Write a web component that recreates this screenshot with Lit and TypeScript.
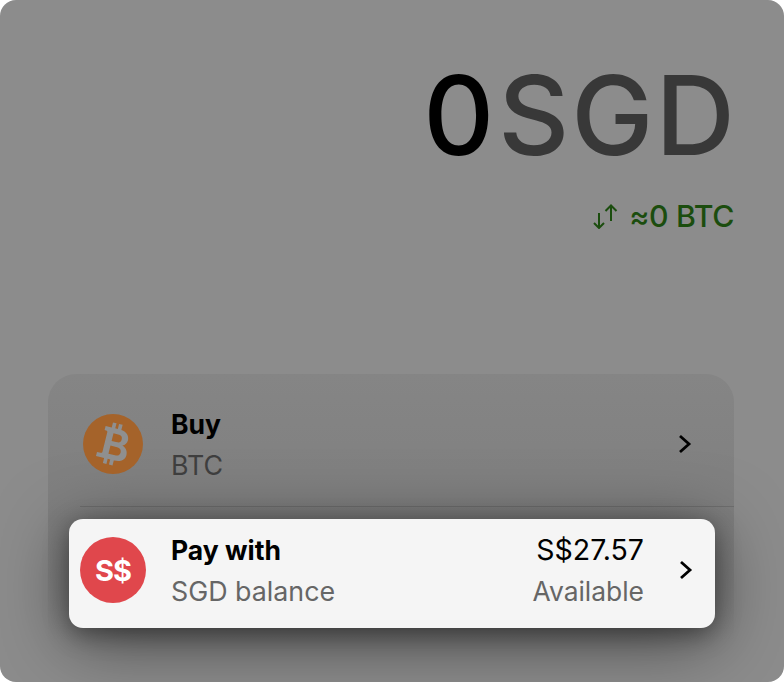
import { LitElement, css, html } from "lit";
import { customElement } from "lit/decorators.js";

@customElement("app-root")
export class AppRoot extends LitElement {
  static styles = css`
    :host {
      display: block;
      height: 682px;
      background: #fff;
      font-family: Inter, "Liberation Sans", sans-serif;
    }

    .sheet {
      box-sizing: border-box;
      height: 682px;
      padding: 0 50px 0 48px;
      background: #8c8c8c;
      border-radius: 16px;
      overflow: hidden;
    }

    .amount {
      display: flex;
      justify-content: flex-end;
      gap: 4px;
      margin-right: -3px;
      padding-top: 59px;
      font-size: 110px;
      line-height: 112px;
      font-weight: 500;
      letter-spacing: 2px;
      color: #383838;
    }

    .amount b {
      font-weight: 500;
      letter-spacing: 0;
      color: #000;
    }

    .convert {
      display: flex;
      justify-content: flex-end;
      align-items: center;
      gap: 11px;
      margin-top: 22px;
      font-size: 30.3px;
      line-height: 46px;
      font-weight: 500;
      letter-spacing: -0.4px;
      color: #1b4d0e;
    }

    .panel {
      height: 290px;
      margin-top: 135px;
      box-sizing: border-box;
      border-radius: 28px;
      background: linear-gradient(#858585, #7f7f7f 50%, #8c8c8c 92%);
    }

    .row {
      display: flex;
      align-items: center;
    }

    .buy {
      box-sizing: border-box;
      height: 133px;
      margin-left: 32px;
      padding: 8px 42px 0 3px;
      border-bottom: 1px solid #6f6f6f;
    }

    .pay {
      box-sizing: border-box;
      height: 109px;
      margin: 12px 19px 0 21px;
      padding: 0 22px 7px 11px;
      background: #f5f5f5;
      border-radius: 14px;
      box-shadow: 0 6px 24px rgba(0, 0, 0, 0.38), 0 14px 70px rgba(0, 0, 0, 0.5);
    }

    .coin {
      width: 60px;
      height: 60px;
      border-radius: 50%;
      flex: none;
      display: flex;
      align-items: center;
      justify-content: center;
    }

    .btc {
      background: #a5632a;
      color: #8f8f8f;
    }

    .sgd {
      width: 66px;
      height: 66px;
      background: #e0474c;
      color: #fff;
      font-size: 29px;
      font-weight: 700;
      letter-spacing: -1px;
    }

    .text {
      flex: 1;
      margin-left: 28px;
    }

    .pay .text {
      margin-left: 25px;
    }

    .title {
      font-size: 26.5px;
      line-height: 36px;
      font-weight: 700;
      color: #000;
    }

    .sub {
      margin-top: 5px;
      font-size: 26.8px;
      line-height: 36px;
      color: #3e3e3e;
    }

    .pay .sub {
      color: #666;
    }

    .values {
      margin-right: 35px;
      text-align: right;
    }

    .values .sub {
      font-size: 26.4px;
    }

    .value {
      font-size: 28.5px;
      line-height: 36px;
      color: #000;
    }

    svg {
      display: block;
      flex: none;
    }
  `;

  private chevron() {
    return html`<svg width="14" height="20" viewBox="0 0 14 20" fill="none" stroke="#000" stroke-width="2.8">
      <path d="M2 2 L11 10 L2 18" />
    </svg>`;
  }

  render() {
    return html`
      <div class="sheet">
        <div class="amount"><b>0</b><span>SGD</span></div>
        <div class="convert">
          <svg width="25" height="25" viewBox="0 0 25 25" fill="none" stroke="#1b4d0e" stroke-width="2">
            <path d="M6 9 V24 M1 19 L6 24 L11 19" />
            <path d="M18 17 V1.5 M12.5 7 L18 1.5 L23.5 7" />
          </svg>
          <span>≈0 BTC</span>
        </div>
        <div class="panel">
          <div class="row buy">
            <div class="coin btc">
              <svg width="38" height="44" viewBox="-3 -1 36 42" fill="currentColor">
                <path
                  transform="rotate(14 15 20)"
                  fill-rule="evenodd"
                  d="M10 0 H13.5 V5 H16 V0 H19.5 V5.1 C25 5.6 28 9 28 13 C28 16 26.5 18 24 19.3 C27.5 20.5 30 23 30 27 C30 32 26 35 20 35 H19.5 V40 H16 V35 H13.5 V40 H10 V35 H2 V31 H5.5 C6.5 31 7 30.5 7 29.5 V10.5 C7 9.5 6.5 9 5.5 9 H4 V5 H10 Z M13 10 V17.5 H18.5 C21 17.5 22 16 22 13.8 C22 11.5 21 10 18.5 10 Z M13 22 V30 H19.5 C22.5 30 24 28.5 24 26 C24 23.5 22.5 22 19.5 22 Z"
                />
              </svg>
            </div>
            <div class="text">
              <div class="title">Buy</div>
              <div class="sub">BTC</div>
            </div>
            ${this.chevron()}
          </div>
          <div class="row pay">
            <div class="coin sgd">S$</div>
            <div class="text">
              <div class="title">Pay with</div>
              <div class="sub">SGD balance</div>
            </div>
            <div class="values">
              <div class="value">S$27.57</div>
              <div class="sub">Available</div>
            </div>
            ${this.chevron()}
          </div>
        </div>
      </div>
    `;
  }
}
